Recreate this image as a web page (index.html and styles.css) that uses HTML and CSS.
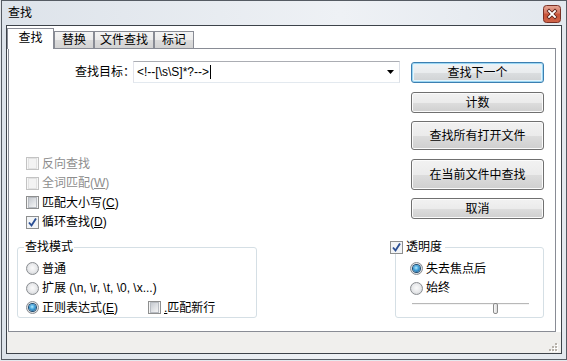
FILE: index.html
```html
<!DOCTYPE html>
<html>
<head>
<meta charset="utf-8">
<title>查找</title>
<link rel="stylesheet" href="styles.css">
</head>
<body>
<div class="window">
  <div class="titlebar">
    <span class="title">查找</span>
    <svg class="close" width="18" height="18" viewBox="0 0 18 18">
      <defs>
        <linearGradient id="cg" x1="0" y1="0" x2="0" y2="1">
          <stop offset="0" stop-color="#e6a896"/>
          <stop offset="0.45" stop-color="#d57560"/>
          <stop offset="0.5" stop-color="#c85237"/>
          <stop offset="1" stop-color="#d0654a"/>
        </linearGradient>
      </defs>
      <rect x="0.5" y="0.5" width="17" height="17" rx="3" fill="url(#cg)" stroke="#7a3126"/>
      <path d="M6 6 L12 12 M12 6 L6 12" stroke="#5a2018" stroke-width="3.4" stroke-linecap="square"/>
      <path d="M6 6 L12 12 M12 6 L6 12" stroke="#ffffff" stroke-width="1.8" stroke-linecap="square"/>
    </svg>
  </div>
  <div class="client">
    <div class="tabs">
      <div class="tab active">查找</div>
      <div class="tab t2">替换</div>
      <div class="tab t3">文件查找</div>
      <div class="tab t4">标记</div>
    </div>
    <div class="panel">
      <div class="top">
        <div class="left">
          <div class="find-row">
            <span class="find-label">查找目标：</span>
            <div class="combo">
              <span class="combo-text">&lt;!--[\s\S]*?--&gt;</span><span class="caret"></span>
              <svg class="arrow" width="7" height="4" viewBox="0 0 7 4"><path d="M0 0 H7 L3.5 4 Z" fill="#000"/></svg>
            </div>
          </div>
          <div class="checks">
            <div class="check disabled"><span class="box"></span>反向查找</div>
            <div class="check disabled"><span class="box"></span>全词匹配(<u>W</u>)</div>
            <div class="check"><span class="box"></span>匹配大小写(<u>C</u>)</div>
            <div class="check"><span class="box checked"><svg width="11" height="11" viewBox="0 0 11 11"><path d="M2 5.5 L4.5 8.5 L9 1.5" fill="none" stroke="#2b4f94" stroke-width="1.9"/></svg></span>循环查找(<u>D</u>)</div>
          </div>
        </div>
        <div class="buttons">
          <div class="btn default">查找下一个</div>
          <div class="btn b2">计数</div>
          <div class="btn b3">查找所有打开文件</div>
          <div class="btn b4">在当前文件中查找</div>
          <div class="btn b5">取消</div>
        </div>
      </div>
      <div class="groups">
        <div class="group mode">
          <div class="gtitle">查找模式</div>
          <div class="rows">
            <div class="opt"><span class="radio"></span>普通</div>
            <div class="opt"><span class="radio"></span>扩展 (\n, \r, \t, \0, \x...)</div>
            <div class="opt"><span class="opt-wide"><span class="radio on"></span>正则表达式(<u>E</u>)</span><span class="box"></span><u>.</u> 匹配新行</div>
          </div>
        </div>
        <div class="group trans">
          <div class="gtitle gtitle-check"><span class="box checked"><svg width="11" height="11" viewBox="0 0 11 11"><path d="M2 5.5 L4.5 8.5 L9 1.5" fill="none" stroke="#2b4f94" stroke-width="1.9"/></svg></span>透明度</div>
          <div class="rows rows-trans">
            <div class="opt"><span class="radio on"></span>失去焦点后</div>
            <div class="opt"><span class="radio"></span>始终</div>
            <div class="slider"><span class="track"></span><span class="thumb"></span></div>
          </div>
        </div>
      </div>
    </div>
    <div class="statusbar">
      <svg class="grip" width="11" height="11" viewBox="0 0 11 11">
        <g fill="#ffffff">
          <rect x="9" y="3" width="2" height="2"/><rect x="6" y="6" width="2" height="2"/><rect x="9" y="6" width="2" height="2"/>
          <rect x="3" y="9" width="2" height="2"/><rect x="6" y="9" width="2" height="2"/><rect x="9" y="9" width="2" height="2"/>
        </g>
        <g fill="#b7b2ab">
          <rect x="8" y="2" width="2" height="2"/><rect x="5" y="5" width="2" height="2"/><rect x="8" y="5" width="2" height="2"/>
          <rect x="2" y="8" width="2" height="2"/><rect x="5" y="8" width="2" height="2"/><rect x="8" y="8" width="2" height="2"/>
        </g>
      </svg>
    </div>
  </div>
</div>
</body>
</html>
```
FILE: styles.css
```css
* { box-sizing: border-box; }
html, body { margin: 0; padding: 0; }
body {
  width: 567px;
  height: 361px;
  overflow: hidden;
  background: #e4e8ed;
  font-family: "Liberation Sans", "Noto Sans CJK SC", sans-serif;
  font-size: 12px;
  color: #000;
}
u { text-decoration: underline; text-underline-offset: 1px; }

.window {
  margin-left: 1px;
  width: 566px;
  height: 360px;
  border: 1px solid #555b63;
  background: linear-gradient(to right, #dde3ea 0%, #eef1f5 60%, #e3e8ee 100%);
  display: flex;
  flex-direction: column;
}
.titlebar {
  flex: none;
  height: 24px;
  display: flex;
  justify-content: space-between;
  align-items: flex-start;
}
.title { margin: 5px 0 0 6px; line-height: 14px; }
.close { display: block; margin: 4px 5px 0 0; }

.client {
  flex: 1;
  margin: 0 4px 5px 4px;
  border: 1px solid #3d434a;
  background: #fff;
  display: flex;
  flex-direction: column;
}

.tabs {
  flex: none;
  display: flex;
  align-items: flex-end;
  height: 23px;
  padding-top: 2px;
  margin-bottom: -1px;
  position: relative;
  z-index: 1;
}
.tab {
  height: 18px;
  border: 1px solid #898c95;
  background: linear-gradient(#f4f4f4 0%, #ececec 50%, #dcdcdc 51%, #d3d3d3 100%);
  display: flex;
  align-items: center;
  justify-content: center;
  line-height: 14px;
}
.tab.active {
  width: 47px;
  height: 21px;
  background: #fff;
  border-bottom: none;
  padding-bottom: 2px;
}
.t2 { width: 40px; margin-bottom: 1px; height: 17px; }
.t3 { width: 60px; margin-bottom: 1px; height: 17px; }
.t4 { width: 40px; margin-bottom: 1px; height: 17px; }
.tab.t2, .tab.t3, .tab.t4 { border-bottom: none; }

.panel {
  flex: none;
  margin-left: 1px;
  width: 548px;
  height: 284px;
  border: 1px solid #898c95;
  background: #fff;
  padding-right: 11px;
  display: flex;
  flex-direction: column;
}
.top { display: flex; }
.left { flex: 1; }
.find-row {
  display: flex;
  align-items: center;
  height: 22px;
  margin-top: 12px;
}
.find-label {
  width: 124px;
  padding-left: 66px;
  white-space: nowrap;
  line-height: 14px;
}
.combo {
  width: 267px;
  height: 22px;
  border: 1px solid;
  border-color: #abadb3 #dbdfe6 #e3e9ef #e2e3ea;
  display: flex;
  align-items: center;
  padding-left: 3px;
  padding-right: 5px;
}
.combo-text { white-space: pre; line-height: 14px; }
.caret { width: 1px; height: 14px; background: #000; margin-left: 1px; }
.arrow { display: block; margin-left: auto; }

.checks { margin-top: 71px; padding-left: 17px; }
.check {
  display: flex;
  align-items: center;
  height: 19.5px;
  white-space: nowrap;
  line-height: 14px;
}
.check.disabled { color: #8d8d8d; }

.box {
  flex: none;
  width: 13px;
  height: 13px;
  margin-right: 3px;
  border: 1px solid #8e8f8f;
  background: #f4f4f4;
  padding: 1px;
  display: flex;
  align-items: center;
  justify-content: center;
}
.box::before {
  content: "";
  display: block;
  width: 9px;
  height: 9px;
  border: 1px solid #b8bcc2;
  background: linear-gradient(135deg, #c6cad0 0%, #e2e4e7 60%, #f4f4f4 100%);
}
.box.checked { background: #f2f4f6; padding: 0; }
.box.checked::before { display: none; }
.box.checked svg { display: block; }
.disabled .box { border-color: #c3c3c3; background: #f7f7f7; }
.disabled .box::before { border-color: #e2e2e2; background: #f3f3f3; }

.buttons {
  flex: none;
  width: 133px;
  margin-left: 11px;
  margin-top: 13px;
  display: flex;
  flex-direction: column;
}
.btn {
  height: 21px;
  border: 1px solid #707070;
  border-radius: 3px;
  background: linear-gradient(#f2f2f2 0%, #ebebeb 50%, #dddddd 51%, #cfcfcf 100%);
  box-shadow: inset 0 0 0 1px #fbfbfb;
  display: flex;
  align-items: center;
  justify-content: center;
  line-height: 14px;
  white-space: nowrap;
}
.btn.default {
  border-color: #3c7fb1;
  box-shadow: inset 0 0 0 1px #9cd6f2, inset 0 0 0 2px #e4f4fc;
  background: linear-gradient(#f0f3f5 0%, #e9ecee 50%, #dbdee0 51%, #cfd2d4 100%);
}
.b2 { margin-top: 9px; }
.b3 { margin-top: 8px; height: 29px; }
.b4 { margin-top: 9px; height: 31px; }
.b5 { margin-top: 8px; }

.groups { display: flex; margin-top: 15px; }
.group {
  height: 71px;
  border: 1px solid #d5dfe5;
  border-radius: 3px;
}
.mode { margin-left: 8px; width: 240px; }
.trans { margin-left: auto; width: 149px; }
.gtitle {
  margin-top: -8px;
  margin-left: 6px;
  padding: 0 1px;
  width: max-content;
  height: 14px;
  line-height: 14px;
  background: #fff;
  display: flex;
  align-items: center;
}
.gtitle-check { margin-left: -6px; padding: 0 3px 0 0; }
.rows { margin-top: 5px; padding-left: 8px; }
.rows-trans { padding-left: 14px; }
.opt {
  display: flex;
  align-items: center;
  height: 19.5px;
  white-space: nowrap;
  line-height: 14px;
}
.opt-wide { display: flex; align-items: center; width: 122px; }
.radio {
  flex: none;
  width: 13px;
  height: 13px;
  margin-right: 3px;
  border-radius: 50%;
  border: 1px solid #8a8d91;
  background: radial-gradient(circle at 50% 45%, #fbfbfb 0%, #e8e9eb 50%, #c7cace 100%);
  display: flex;
  align-items: center;
  justify-content: center;
}
.radio.on::after {
  content: "";
  width: 7px;
  height: 7px;
  border-radius: 50%;
  background: radial-gradient(circle at 45% 40%, #b4ecff 0%, #3f9fd8 45%, #114d80 100%);
  box-shadow: 0 0 0 1px #1d4a6f;
}
.slider {
  position: relative;
  margin-left: 2px;
  width: 117px;
  height: 12px;
}
.track {
  display: block;
  margin-top: 5px;
  height: 2px;
  border-top: 1px solid #b8b8b8;
  border-bottom: 1px solid #f4f4f4;
}
.thumb {
  position: absolute;
  left: 81px;
  top: 0;
  width: 5px;
  height: 11px;
  border: 1px solid #8c8c8c;
  border-radius: 2px;
  background: linear-gradient(to right, #f8f8f8, #dcdcdc);
}

.statusbar {
  flex: 1;
  background: #f0efed;
  display: flex;
  justify-content: flex-end;
  align-items: flex-end;
}
.grip { display: block; margin: 0 3px 1px 0; }
```
